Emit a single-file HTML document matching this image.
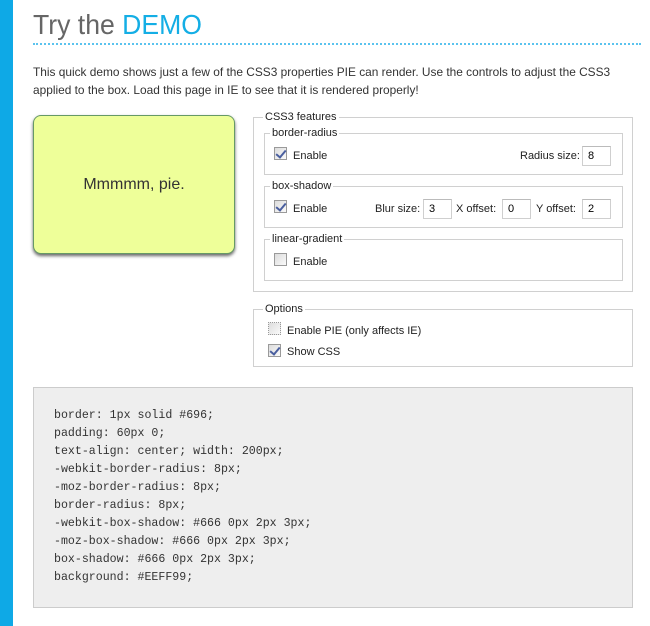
<!DOCTYPE html>
<html><head><style>
*{margin:0;padding:0;box-sizing:border-box}
body{width:650px;height:626px;background:#fff;position:relative;overflow:hidden;font-family:"Liberation Sans",Arial,sans-serif;color:#333;font-size:11px}
.a{position:absolute;white-space:nowrap}
.fs{position:absolute;border:1px solid #d0d0d0}
.lg{position:absolute;background:#fff;padding:0 2px;top:-7px;font-size:11px;line-height:13px;color:#222}
.cb{position:absolute;width:13px;height:13px;border:1px solid #9a9a9a;background:linear-gradient(135deg,#dcdcdc,#fafafa)}
.cb.on::after{content:"";position:absolute;left:3px;top:0px;width:4px;height:8px;border:solid #4a5f9f;border-width:0 2px 2px 0;transform:rotate(40deg)}
.in{position:absolute;width:29px;height:20px;border:1px solid #cfcfcf;border-top-color:#bbb;background:#fff;font-size:11px;line-height:18px;padding-left:5px;color:#000}
.t{position:absolute;font-size:11px;color:#222;line-height:13px}
pre{font-family:"Liberation Mono",monospace;font-size:11.6px;line-height:18px;color:#333}
</style></head><body>
<div class="a" style="left:0;top:0;width:13px;height:626px;background:#0ea9e6"></div>
<div class="a" style="left:33px;top:8px;font-size:28px;line-height:34px;color:#666;transform:scaleX(0.95);transform-origin:left">Try the <span style="color:#14aee5">DEMO</span></div>
<div class="a" style="left:33px;top:43px;width:608px;border-top:2px dotted #5bc3ee;height:0"></div>
<div class="a" style="left:33px;top:63px;font-size:12px;line-height:18px;color:#333;transform:scaleX(0.99);transform-origin:left">This quick demo shows just a few of the CSS3 properties PIE can render. Use the controls to adjust the CSS3<br>applied to the box. Load this page in IE to see that it is rendered properly!</div>

<div class="a" style="left:33px;top:115px;width:202px;height:139px;background:#EEFF99;border:1px solid #696;border-radius:8px;box-shadow:#666 0 2px 3px;text-align:center;line-height:137px;font-size:16px;color:#333">Mmmmm, pie.</div>

<div class="fs" style="left:253px;top:117px;width:380px;height:175px">
 <div class="lg" style="left:9px">CSS3 features</div>
</div>
<div class="fs" style="left:264px;top:133px;width:359px;height:42px"><div class="lg" style="left:5px">border-radius</div></div>
<div class="cb on" style="left:274px;top:147px"></div><div class="t" style="left:293px;top:150px">Enable</div>
<div class="t" style="left:520px;top:150px">Radius size:</div><div class="in" style="left:582px;top:146px">8</div>

<div class="fs" style="left:264px;top:186px;width:359px;height:42px"><div class="lg" style="left:5px">box-shadow</div></div>
<div class="cb on" style="left:274px;top:200px"></div><div class="t" style="left:293px;top:203px">Enable</div>
<div class="t" style="left:375px;top:203px">Blur size:</div><div class="in" style="left:423px;top:199px">3</div>
<div class="t" style="left:456px;top:203px">X offset:</div><div class="in" style="left:502px;top:199px">0</div>
<div class="t" style="left:536px;top:203px">Y offset:</div><div class="in" style="left:582px;top:199px">2</div>

<div class="fs" style="left:264px;top:239px;width:359px;height:42px"><div class="lg" style="left:5px">linear-gradient</div></div>
<div class="cb" style="left:274px;top:253px"></div><div class="t" style="left:293px;top:256px">Enable</div>

<div class="fs" style="left:253px;top:309px;width:380px;height:58px"><div class="lg" style="left:9px">Options</div></div>
<div class="cb" style="left:268px;top:322px;border-style:dotted"></div><div class="t" style="left:287px;top:325px">Enable PIE (only affects IE)</div>
<div class="cb on" style="left:268px;top:344px"></div><div class="t" style="left:287px;top:346px">Show CSS</div>

<div class="a" style="left:33px;top:387px;width:600px;height:221px;background:#eee;border:1px solid #ccc;padding:19px 0 0 20px">
<pre>border: 1px solid #696;
padding: 60px 0;
text-align: center; width: 200px;
-webkit-border-radius: 8px;
-moz-border-radius: 8px;
border-radius: 8px;
-webkit-box-shadow: #666 0px 2px 3px;
-moz-box-shadow: #666 0px 2px 3px;
box-shadow: #666 0px 2px 3px;
background: #EEFF99;</pre>
</div>
</body></html>
